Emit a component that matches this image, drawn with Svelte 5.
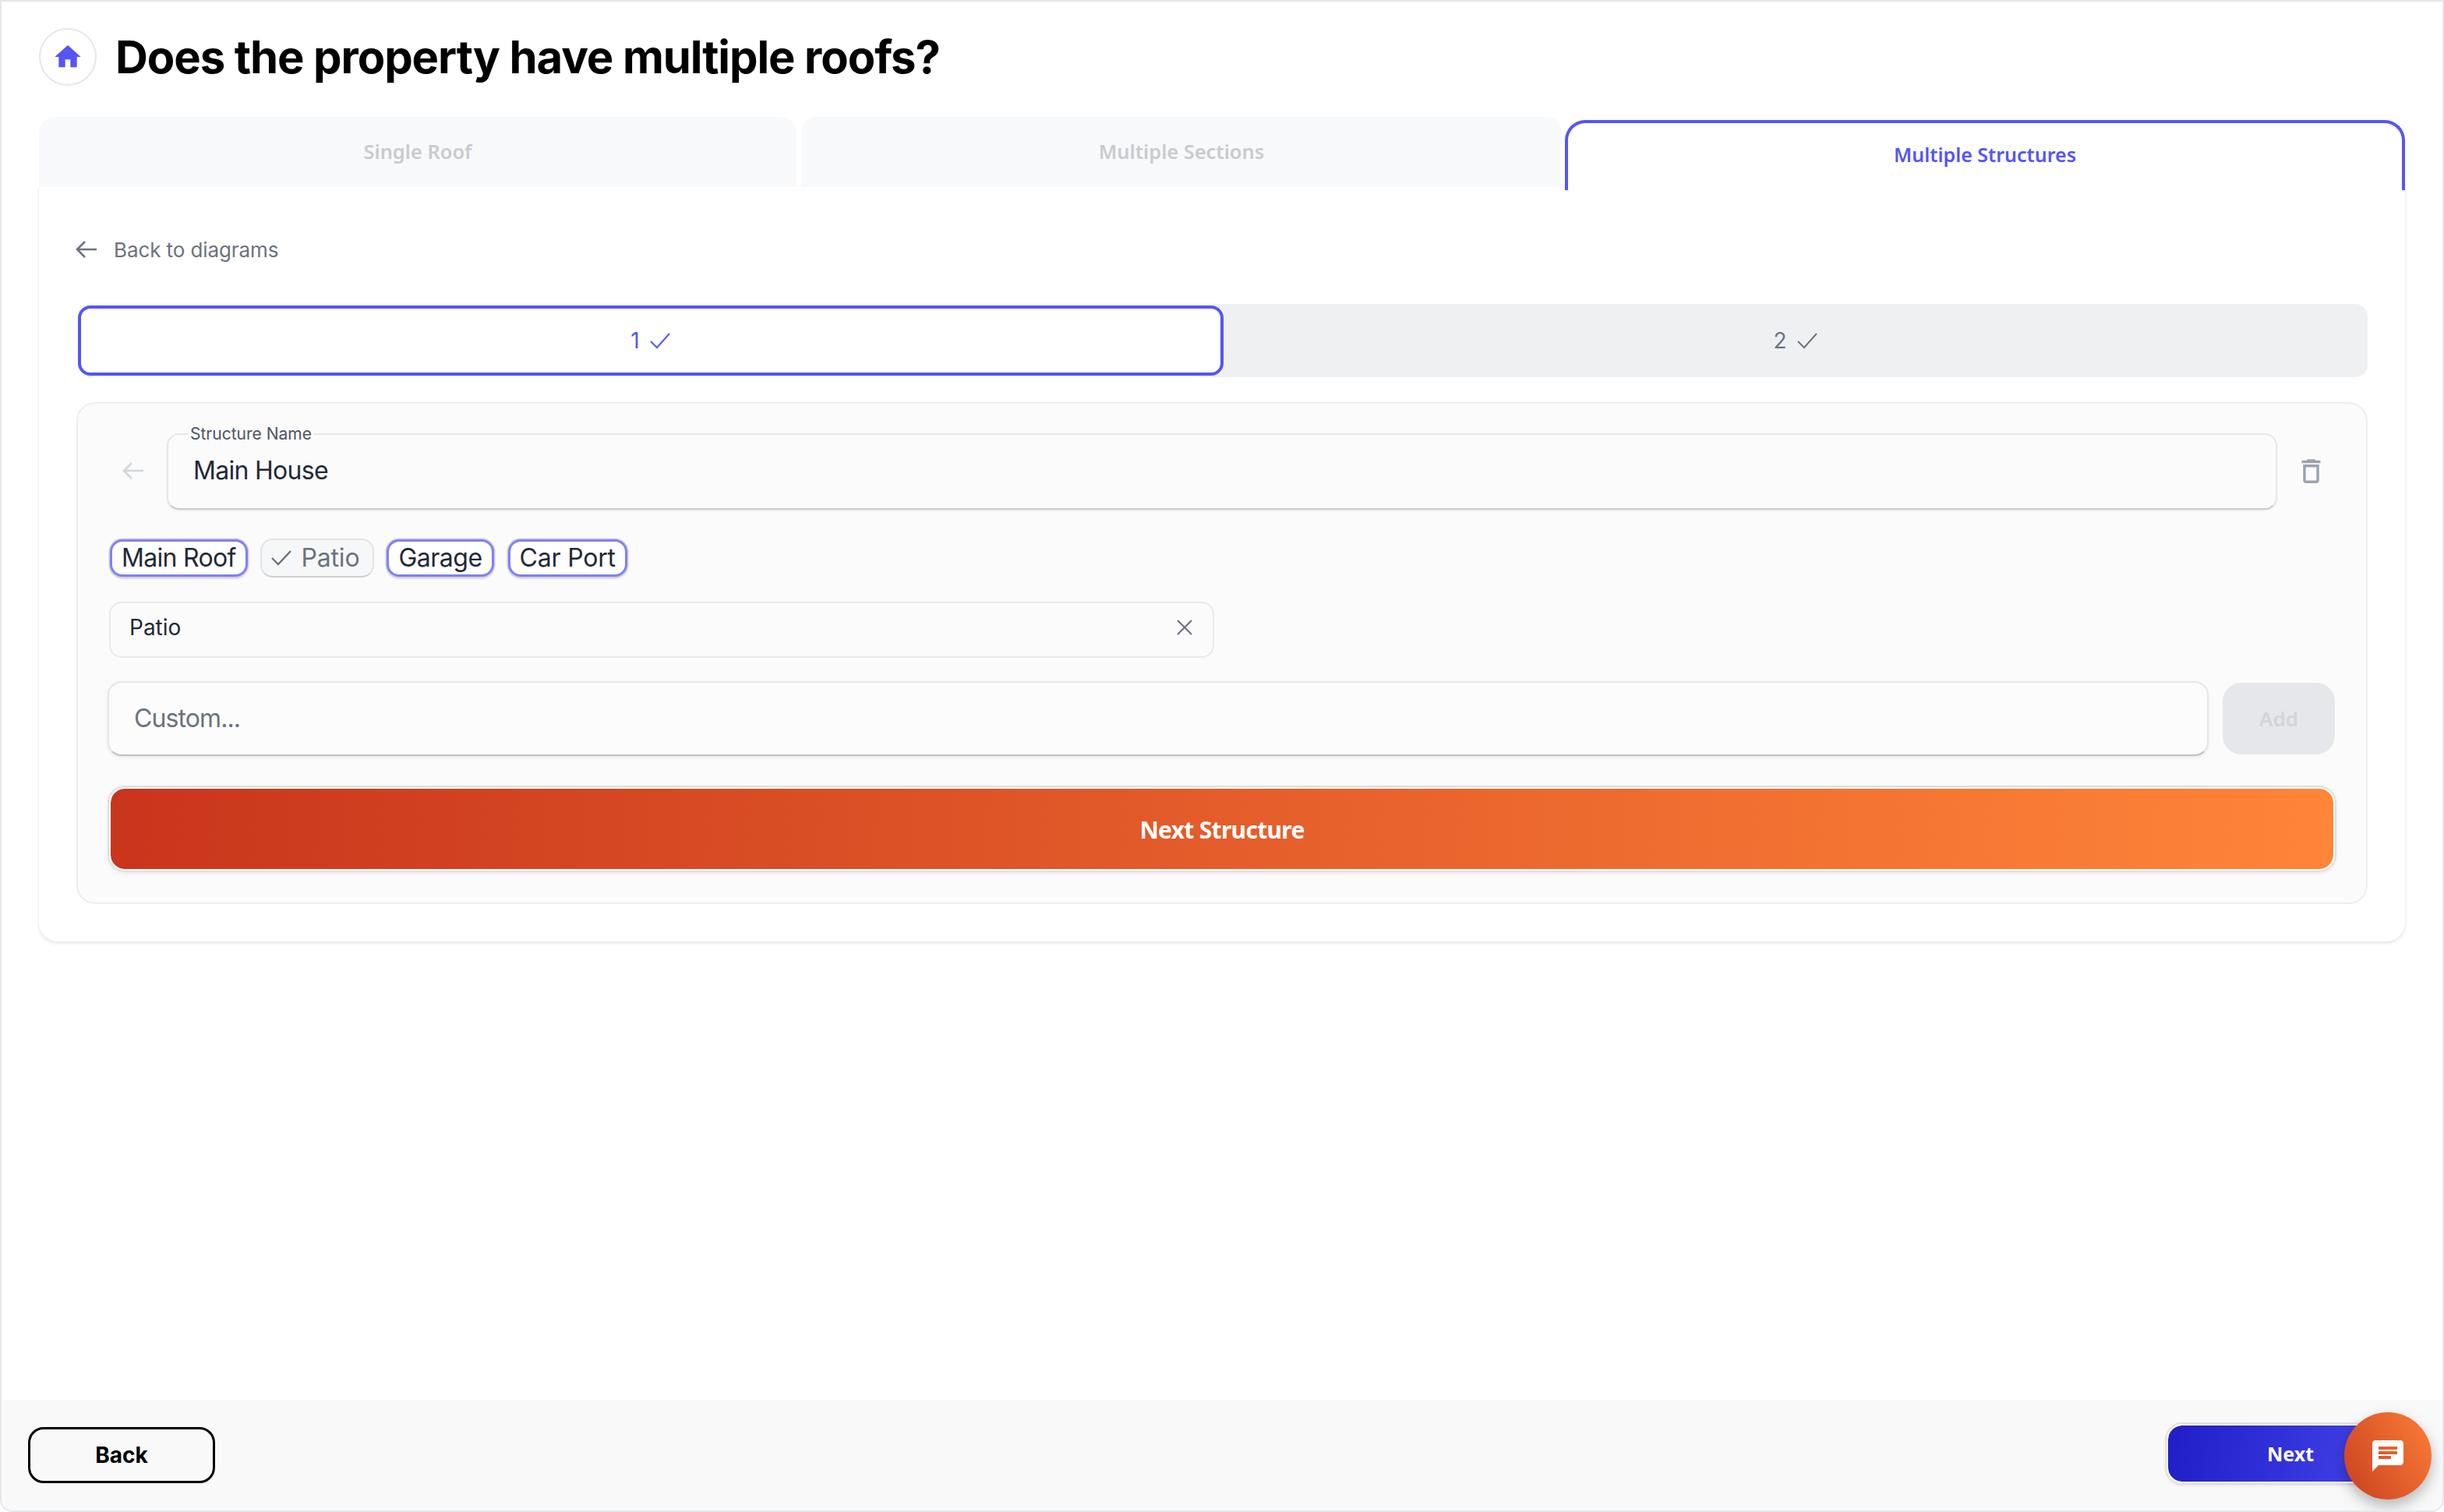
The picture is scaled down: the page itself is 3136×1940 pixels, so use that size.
<script>
  const chips = [
    { label: 'Main Roof', done: false, spacing: -0.7 },
    { label: 'Patio', done: true, spacing: -0.2 },
    { label: 'Garage', done: false, spacing: -0.5 },
    { label: 'Car Port', done: false, spacing: -0.2 }
  ];
</script>

<div class="frame">
  <main class="main">
    <header class="head">
      <span class="home">
        <svg viewBox="0 0 24 24" width="40" height="40"><path d="M10 20v-6h4v6h5v-8h3L12 3 2 12h3v8z" fill="#5555f6"/></svg>
      </span>
      <h1>Does the property have multiple roofs?</h1>
    </header>

    <nav class="tabs">
      <div class="tab">Single Roof</div>
      <div class="tab tab2">Multiple Sections</div>
      <div class="tab on">Multiple Structures</div>
    </nav>

    <section class="card">
      <div class="backlink">
        <svg viewBox="0 0 28 28" width="28" height="28"><path d="M13 4 3 14l10 10M3 14h25" fill="none" stroke="#6b7280" stroke-width="2.6"/></svg>
        <span>Back to diagrams</span>
      </div>

      <div class="steps">
        <div class="step on">
          <span>1</span>
          <svg viewBox="0 0 28 28" width="28" height="28"><path d="M2 15l8 8L26 5" fill="none" stroke="#5555f6" stroke-width="2"/></svg>
        </div>
        <div class="step">
          <span>2</span>
          <svg viewBox="0 0 28 28" width="28" height="28"><path d="M2 15l8 8L26 5" fill="none" stroke="#6b7280" stroke-width="2"/></svg>
        </div>
      </div>

      <div class="panel">
        <div class="namerow">
          <svg class="dim" viewBox="0 0 28 28" width="28" height="28"><path d="M13 4 3 14l10 10M3 14h25" fill="none" stroke="#d1d5db" stroke-width="2.6"/></svg>
          <div class="field">
            <span class="legend">Structure Name</span>
            <span class="value">Main House</span>
          </div>
          <svg class="trash" viewBox="0 0 24 24" width="41" height="41"><path d="M6 19c0 1.1.9 2 2 2h8c1.1 0 2-.9 2-2V7H6v12zM8 9h8v10H8V9zm7.5-5l-1-1h-5l-1 1H5v2h14V4z" fill="#9ca3af"/></svg>
        </div>

        <div class="chips">
          {#each chips as c}
            <div class="chip" class:done={c.done} style="letter-spacing: {c.spacing}px">
              {#if c.done}
                <svg viewBox="0 0 28 28" width="28" height="28"><path d="M2 15l8 8L26 6" fill="none" stroke="#6b7280" stroke-width="2.4"/></svg>
              {/if}
              <span>{c.label}</span>
            </div>
          {/each}
        </div>

        <div class="select">
          <span>Patio</span>
          <svg viewBox="0 0 24 24" width="24" height="24"><path d="M3 3l18 18M21 3 3 21" fill="none" stroke="#6b7280" stroke-width="2.2"/></svg>
        </div>

        <div class="customrow">
          <div class="custom">Custom...</div>
          <div class="add">Add</div>
        </div>

        <div class="nextstruct">Next Structure</div>
      </div>
    </section>
  </main>

  <footer class="foot">
    <div class="backbtn">Back</div>
    <div class="nextbtn">Next</div>
  </footer>

  <div class="chat">
    <svg viewBox="0 0 24 24" width="48" height="48"><path d="M20 2H4c-1.1 0-1.99.9-1.99 2L2 22l4-4h14c1.1 0 2-.9 2-2V4c0-1.1-.9-2-2-2zM6 9h12v2H6V9zm8 5H6v-2h8v2zm4-6H6V6h12v2z" fill="#fff"/></svg>
  </div>
</div>

<style>
  :global(body) { margin: 0; background: #fff; }
  .frame {
    position: relative;
    box-sizing: border-box;
    width: 3136px;
    height: 1940px;
    display: flex;
    flex-direction: column;
    border: 2px solid #e5e7eb;
    border-radius: 0 0 16px 16px;
    overflow: hidden;
    font-family: "Inter", "Noto Sans", sans-serif;
    color: #111827;
  }
  .main { flex: 1; padding: 34px 48px 0 48px; }
  .head { display: flex; align-items: center; gap: 24px; height: 74px; }
  .home {
    box-sizing: border-box;
    width: 74px; height: 74px;
    border: 2px solid #e5e7eb; border-radius: 50%;
    display: flex; align-items: center; justify-content: center;
  }
  h1 { margin: 0; font-size: 58px; line-height: 74px; font-weight: 700; color: #000; letter-spacing: -1.1px; }
  .tabs { display: flex; align-items: flex-end; gap: 6px; margin-top: 40px; height: 92px; }
  .tab {
    flex: 0 0 972px; height: 90px; margin-bottom: 2px;
    box-sizing: border-box;
    padding-bottom: 2px;
    background: #f8f9fa;
    border-radius: 20px 20px 0 0;
    display: flex; align-items: center; justify-content: center;
    font: 600 25.4px "Noto Sans", sans-serif;
    color: #c9cbcf;
  }
  .tab2 { flex-basis: 976px; }
  .tab.on {
    flex: 0 0 1078px; margin-left: -2px; margin-bottom: -2px; height: 90px;
    background: #fff;
    border: 4px solid #5555f6; border-bottom: 0;
    border-radius: 26px 26px 0 0;
    color: #5555f6;
    font-size: 25px;
    position: relative;
    padding-bottom: 6px;
  }
  .card {
    box-sizing: border-box;
    margin-top: -2px;
    height: 968px;
    background: #fff;
    border-radius: 0 0 24px 24px;
    box-shadow: 0 2px 4px rgba(0,0,0,.12);
    padding: 0 48px 0 48px;
  }
  .backlink { display: flex; align-items: center; gap: 22px; height: 40px; padding-top: 60px; margin-left: -2px; font-size: 26px; letter-spacing: -0.1px; color: #6b7280; }
  .steps {
    display: grid; grid-template-columns: 1470px 1fr;
    margin: 50px 0 0 2px;
    height: 94px; background: #eff0f2; border-radius: 16px;
  }
  .step {
    display: flex; align-items: center; justify-content: center; gap: 12px;
    font-size: 28px; color: #6b7280;
  }
  .step.on {
    box-sizing: border-box;
    margin: 2px 0;
    background: #fff; border: 4px solid #5555f6; border-radius: 16px; color: #5555f6;
  }
  .panel {
    box-sizing: border-box;
    margin-top: 32px;
    height: 644px;
    background: #fbfbfb; border: 2px solid #eee; border-radius: 24px;
    padding: 38px 38px 0 38px;
  }
  .namerow { display: flex; align-items: center; height: 98px; }
  .dim { margin: -2px 30px 0 18px; }
  .field {
    box-sizing: border-box;
    position: relative;
    flex: 0 0 2708px; height: 98px;
    display: flex; align-items: center;
    padding-left: 32px;
    font-size: 32px; color: #1f2937;
    border: 2px solid #e5e7eb; border-radius: 16px;
    border-bottom-color: #c9cbcf;
    box-shadow: 0 1px 2px rgba(0,0,0,.1);
  }
  .value { letter-spacing: -0.7px; margin-top: -4px; }
  .legend {
    position: absolute; left: 26px; top: -13px;
    padding: 0 2px;
    background: #fbfbfb;
    font-size: 21px; line-height: 24px; color: #4b5563;
  }
  .trash { margin: -2px 0 0 23px; }
  .chips { display: flex; align-items: center; gap: 14px; margin-top: 36px; height: 52px; padding-left: 1px; }
  .chip {
    box-sizing: border-box;
    display: flex; align-items: center; gap: 10px;
    height: 48px; padding: 0 12px 2px; margin: 0 2px;
    background: #fff;
    border: 3px solid #8080f5; border-radius: 16px;
    box-shadow: 0 0 0 1.5px #d0d0d8, 0 2px 3px rgba(0,0,0,.22);
    font-size: 32px; color: #1f2937;
  }
  .chip.done {
    height: 50px; margin: 0;
    background: #f6f7f9;
    border: 2px solid #e2e3e6; border-bottom-color: #cfd0d3;
    box-shadow: none; color: #6b7280;
    padding: 0 17px 2px 11px;
    gap: 12px;
  }
  .select {
    box-sizing: border-box;
    display: flex; align-items: center; justify-content: space-between;
    width: 1418px; height: 72px;
    margin: 30px 0 0 2px;
    padding: 0 24px 6px 24px;
    font-size: 28px; color: #1f2937;
    border: 2px solid #e9e9ee; border-radius: 16px;
  }
  .customrow { display: flex; gap: 18px; margin-top: 30px; height: 96px; }
  .custom {
    box-sizing: border-box;
    flex: 0 0 2696px;
    display: flex; align-items: center; padding: 0 0 2px 32px;
    font-size: 32px; letter-spacing: -0.9px; color: #6b7280;
    background: #fcfcfc;
    border: 2px solid #e5e7eb; border-radius: 18px; border-bottom-color: #c0c0c0;
    box-shadow: 0 2px 4px rgba(0,0,0,.08);
  }
  .add {
    flex: 0 0 144px; margin: 2px 0;
    display: flex; align-items: center; justify-content: center;
    background: #e5e7eb; border-radius: 24px;
    font: 600 26px "Noto Sans", sans-serif; color: #d1d5db;
  }
  .nextstruct {
    box-sizing: border-box;
    margin: 40px 0 0 2px;
    width: 2856px;
    height: 107px;
    display: flex; align-items: center; justify-content: center;
    padding-top: 2px;
    background: linear-gradient(92deg, #c9351c, #ff8539);
    background-clip: padding-box;
    border: 2px solid #fff;
    border-radius: 20px;
    box-shadow: 0 0 0 2px #e0e0e0, 0 2px 6px rgba(0,0,0,.12);
    font: 700 30px "Noto Sans", sans-serif; letter-spacing: -0.7px; color: #fff;
  }
  .foot {
    box-sizing: border-box;
    height: 142px;
    background: #f9f9fa;
    display: flex; align-items: center; justify-content: space-between;
    padding: 0 46px 0 34px;
  }
  .backbtn {
    box-sizing: border-box;
    width: 240px; height: 72px;
    display: flex; align-items: center; justify-content: center;
    border: 3px solid #000; border-radius: 20px;
    font-size: 28px; font-weight: 700; color: #000;
  }
  .nextbtn {
    box-sizing: border-box;
    width: 308px; height: 76px; margin-bottom: 4px;
    display: flex; align-items: center; justify-content: center;
    padding-left: 10px;
    background: linear-gradient(100deg, #1f1ec8, #4747ec);
    background-clip: padding-box;
    border: 2px solid #fff; border-radius: 20px;
    box-shadow: 0 0 0 2px #e0e0e0, 0 2px 4px rgba(0,0,0,.15);
    font: 700 25px "Noto Sans", sans-serif; color: #fff;
  }
  .chat {
    position: absolute; left: 3006px; top: 1810px;
    width: 112px; height: 112px; border-radius: 50%;
    display: flex; align-items: center; justify-content: center;
    background: linear-gradient(60deg, #c9401f, #fb7e38);
    box-shadow: 0 8px 18px rgba(0,0,0,.28);
  }
</style>
